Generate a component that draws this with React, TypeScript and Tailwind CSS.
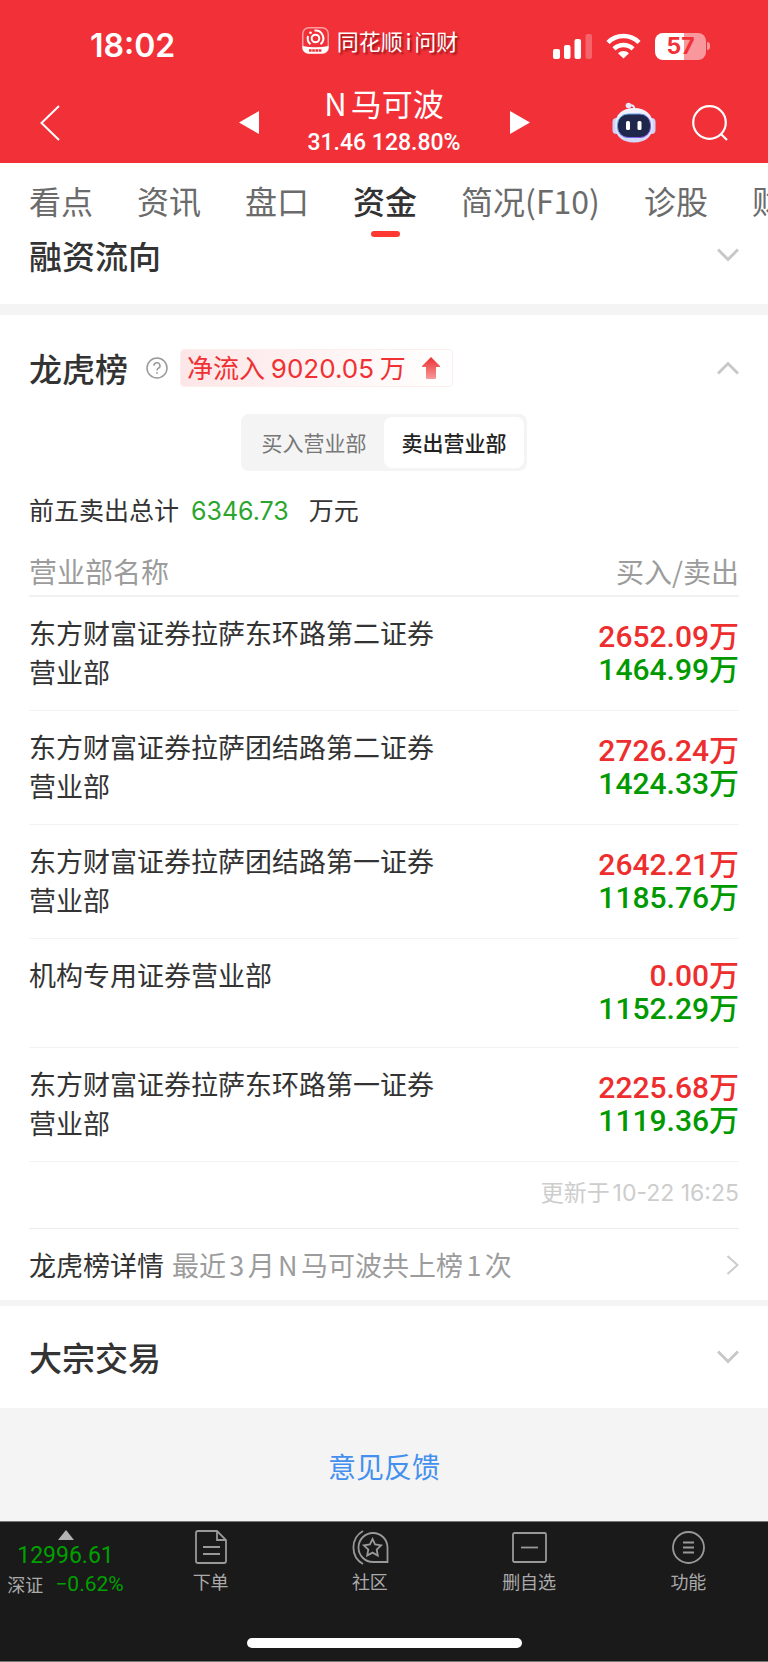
type Department = {
  name: string;
  buy: string;
  sell: string;
};

const tabs = ["看点", "资讯", "盘口", "资金", "简况(F10)", "诊股", "财务"];
const activeTab = "资金";

const departments: Department[] = [
  { name: "东方财富证券拉萨东环路第二证券营业部", buy: "2652.09万", sell: "1464.99万" },
  { name: "东方财富证券拉萨团结路第二证券营业部", buy: "2726.24万", sell: "1424.33万" },
  { name: "东方财富证券拉萨团结路第一证券营业部", buy: "2642.21万", sell: "1185.76万" },
  { name: "机构专用证券营业部", buy: "0.00万", sell: "1152.29万" },
  { name: "东方财富证券拉萨东环路第一证券营业部", buy: "2225.68万", sell: "1119.36万" },
];

function Chevron({ up = false }: { up?: boolean }) {
  return (
    <svg width="22" height="14" viewBox="0 0 22 14" fill="none" stroke="#c8c8c8" strokeWidth="3" aria-hidden="true">
      <path d={up ? "M1 12.500 11 2.500 21 12.500" : "M1 1.500 11 11.500 21 1.500"} />
    </svg>
  );
}

function AppLogo() {
  return (
    <svg width="27" height="27" viewBox="0 0 27 27" fill="none" aria-hidden="true">
      <rect x="0.75" y="0.75" width="25.5" height="25.5" rx="6" stroke="#fa9ea2" strokeWidth="1.5" />
      <path d="M0.5 19Q13.500 21.500 26.500 19V20.500A6 6 0 0 1 20.500 26.500H6.500A6 6 0 0 1 0.500 20.500Z" fill="#fff" />
      <path d="M12.500 3.500A7.800 7.800 0 0 1 18.500 17.200M8.500 17.200A7.800 7.800 0 0 1 6 9" stroke="#fff" strokeWidth="2" />
      <circle cx="13.500" cy="11.500" r="3.800" stroke="#fff" strokeWidth="2" />
      <circle cx="8.500" cy="5.800" r="1.300" fill="#fff" />
      <path d="M7 23.500H20" stroke="#f23038" strokeWidth="2.500" strokeDasharray="2.600 0.600" />
    </svg>
  );
}

function SignalIcon() {
  return (
    <svg width="39" height="25" viewBox="0 0 39 25" fill="#fff" aria-hidden="true">
      <rect x="0" y="15" width="7" height="10" rx="2" />
      <rect x="11" y="11" width="6.500" height="14" rx="2" />
      <rect x="21.500" y="5" width="6.500" height="20" rx="2" />
      <rect x="32.500" y="0" width="6.500" height="25" rx="2" opacity="0.25" />
    </svg>
  );
}

function WifiIcon() {
  return (
    <svg width="35" height="26" viewBox="0 0 35 26" fill="none" stroke="#fff" strokeWidth="4.500" aria-hidden="true">
      <path d="M2 9.500A22 22 0 0 1 33 9.500" />
      <path d="M8 15.800A13.500 13.500 0 0 1 27 15.800" />
      <path d="M17.500 25.500 12 20.200A8 8 0 0 1 23 20.200Z" fill="#fff" stroke="none" />
    </svg>
  );
}

function RobotIcon() {
  return (
    <svg width="44" height="41" viewBox="0 0 44 41" fill="none" aria-hidden="true">
      <defs>
        <linearGradient id="robot-shell" x1="0" y1="0" x2="0" y2="1">
          <stop offset="0" stopColor="#f4f5ff" />
          <stop offset="1" stopColor="#d3d6f6" />
        </linearGradient>
        <linearGradient id="robot-rim" x1="0" y1="0" x2="1" y2="1">
          <stop offset="0" stopColor="#58c4e8" />
          <stop offset="1" stopColor="#8a3df0" />
        </linearGradient>
      </defs>
      <path d="M17 3.500Q22.500 2 22.500 8" stroke="#e6e8fb" strokeWidth="2" />
      <circle cx="16.500" cy="3.500" r="2.800" fill="#e6e8fb" />
      <rect x="0.500" y="16" width="8" height="16" rx="4" fill="#cfd4f7" />
      <rect x="35.500" y="16" width="8" height="16" rx="4" fill="#cfd4f7" />
      <path d="M22 6C34 6 41 13 41 23.500S34 40.500 22 40.500 3 34 3 23.500 10 6 22 6Z" fill="url(#robot-shell)" />
      <rect x="5.500" y="12" width="33" height="23.500" rx="10.500" fill="#1f274b" stroke="url(#robot-rim)" strokeWidth="1" />
      <rect x="14" y="19" width="4" height="9" rx="1.500" fill="#fff" />
      <rect x="25.500" y="19" width="4" height="9" rx="1.500" fill="#fff" />
    </svg>
  );
}

function StatusBar() {
  return (
    <div className="grid h-20 grid-cols-[1fr_auto_1fr] items-center pt-3">
      <div className="pl-[90px] font-[Inter] text-[32px] leading-10 font-semibold">18:02</div>
      <div className="flex items-center gap-2 pr-2 pb-3">
        <AppLogo />
        <span className="text-[22px] leading-6 [text-autospace:normal] [text-shadow:2px_2px_2px_rgba(90,0,0,0.6)]">
          同花顺i问财
        </span>
      </div>
      <div className="flex items-center justify-end gap-3.5 pr-[58px]">
        <SignalIcon />
        <WifiIcon />
        <div className="flex items-center gap-px">
          <div className="flex h-[27px] w-[51px] items-center justify-center rounded-lg bg-linear-to-r from-white from-56% to-[#f9989c] to-56% font-[Inter] text-[23px] leading-none font-bold text-[#f23038]">
            57
          </div>
          <div className="h-2 w-[3px] rounded-r-full bg-[#f9989c]" />
        </div>
      </div>
    </div>
  );
}

function TitleBar() {
  return (
    <div className="grid h-[83px] grid-cols-[1fr_auto_1fr] items-center pt-0.5">
      <button type="button" aria-label="返回" className="justify-self-start pl-10">
        <svg width="20" height="36" viewBox="0 0 20 36" fill="none" stroke="#fff" strokeWidth="2">
          <path d="M19 1 1.500 18 19 35" />
        </svg>
      </button>
      <div className="flex w-[291px] items-center justify-between">
        <button type="button" aria-label="上一只">
          <svg width="20" height="23" viewBox="0 0 20 23" fill="#fff">
            <path d="M20 0V23L0 11.500Z" />
          </svg>
        </button>
        <div className="text-center">
          <h1 className="text-[31px] leading-10 [text-autospace:normal]">N马可波</h1>
          <p className="font-[Roboto] text-[23px] leading-10 font-medium">31.46 128.80%</p>
        </div>
        <button type="button" aria-label="下一只">
          <svg width="20" height="23" viewBox="0 0 20 23" fill="#fff">
            <path d="M0 0V23L20 11.500Z" />
          </svg>
        </button>
      </div>
      <div className="flex items-center justify-end gap-9 pr-10">
        <button type="button" aria-label="智能助手">
          <RobotIcon />
        </button>
        <button type="button" aria-label="搜索">
          <svg width="36" height="36" viewBox="0 0 36 36" fill="none" stroke="#fff" strokeWidth="2.200">
            <circle cx="17.500" cy="17.500" r="16.300" />
            <path d="M28.500 28.500 35 35" />
          </svg>
        </button>
      </div>
    </div>
  );
}

function Tabs() {
  return (
    <nav className="flex h-[79px] gap-11 overflow-hidden pt-3.5 pl-[29px] text-[32px] leading-[46px] whitespace-nowrap">
      {tabs.map((tab) =>
        tab === activeTab ? (
          <a key={tab} href="#" aria-current="page" className="flex shrink-0 flex-col items-center font-medium text-[#333333]">
            {tab}
            <span className="mt-2 h-1.5 w-[29px] rounded-full bg-[#ff3832]" />
          </a>
        ) : (
          <a key={tab} href="#" className="shrink-0 text-[#6b6b6b]">
            {tab}
          </a>
        ),
      )}
    </nav>
  );
}

function DepartmentTable() {
  return (
    <table className="mt-[21px] w-full border-collapse">
      <thead>
        <tr className="border-b-2 border-[#f1f1f1] text-[28px] leading-[46px] text-[#9c9c9c]">
          <th scope="col" className="pb-px text-left font-normal">营业部名称</th>
          <th scope="col" className="pb-px text-right font-normal">买入/卖出</th>
        </tr>
      </thead>
      <tbody>
        {departments.map((item) => (
          <tr key={item.name} className="border-b border-[#f3f3f3]">
            <td className="pt-4 pb-[19px] align-top text-[27px] leading-[39px] text-[#333333]">
              <div className="max-w-[410px]">{item.name}</div>
            </td>
            <td className="pt-5 pb-[22px] text-right align-middle font-[Roboto,'Noto_Sans_CJK_SC',sans-serif] text-[30px] font-medium">
              <div className="h-[33px] leading-[33px] text-[#ee2e2e]">{item.buy}</div>
              <div className="h-[33px] leading-[33px] text-[#009a00]">{item.sell}</div>
            </td>
          </tr>
        ))}
      </tbody>
    </table>
  );
}

function DragonTiger() {
  return (
    <section className="px-[29px] pt-[30px]">
      <div className="flex items-center">
        <h2 className="text-[33px] leading-[46px] font-medium text-[#333333]">龙虎榜</h2>
        <button type="button" aria-label="说明" className="ml-[18px]">
          <svg width="22" height="22" viewBox="0 0 22 22" fill="none" stroke="#999999" strokeWidth="1.500">
            <circle cx="11" cy="11" r="10" />
            <path d="M8 8.800A3 2.900 0 1 1 12.400 11.200Q11 12 11 13.600M11 15V16.800" />
          </svg>
        </button>
        <div className="ml-3 flex h-[38px] items-center gap-4 rounded-sm border border-[#fdeeee] bg-linear-to-r from-[#fde6e7] to-white pr-3 pl-1.5 text-[26px] leading-9 text-[#f03032]">
          <span>
            净流入 <span className="font-[Inter]">9020.05</span> 万
          </span>
          <svg width="18" height="22" viewBox="0 0 18 22" aria-hidden="true">
            <defs>
              <linearGradient id="inflow-arrow" x1="0" y1="0" x2="0" y2="1">
                <stop offset="0" stopColor="#ea2f31" />
                <stop offset="1" stopColor="#f79a9b" />
              </linearGradient>
            </defs>
            <path d="M9 0 18 9V10H14V21Q14 22 13 22H5Q4 22 4 21V10H0V9Z" fill="url(#inflow-arrow)" />
          </svg>
        </div>
        <button type="button" aria-label="收起" className="ml-auto">
          <Chevron up />
        </button>
      </div>

      <div className="mt-[23px] flex justify-center">
        <div className="flex rounded-lg bg-[#f4f4f4] p-[3px] text-[21px] leading-[51px]">
          <button type="button" aria-pressed="false" className="w-[140px] text-[#777777]">
            买入营业部
          </button>
          <button type="button" aria-pressed="true" className="w-[140px] rounded-lg bg-white font-medium text-[#222222]">
            卖出营业部
          </button>
        </div>
      </div>

      <p className="mt-5 flex h-9 items-baseline text-[25px] leading-9 text-[#333333]">
        前五卖出总计
        <span className="ml-3 font-[Inter] text-[#2ba52d]">6346.73</span>
        <span className="ml-5">万元</span>
      </p>

      <DepartmentTable />

      <p className="border-b border-[#ececec] pb-1 text-right font-[Inter,'Noto_Sans_CJK_SC',sans-serif] text-[23px] leading-[62px] text-[#cdcdcd] [text-autospace:normal]">
        更新于10-22 16:25
      </p>
      <a href="#" className="flex items-center gap-2 text-[27px] leading-[71px]">
        <span className="text-[#333333]">龙虎榜详情</span>
        <span className="text-[#9c9c9c] [text-autospace:normal]">最近3月N马可波共上榜1次</span>
        <svg className="ml-auto" width="13" height="20" viewBox="0 0 13 20" fill="none" stroke="#cccccc" strokeWidth="2" aria-hidden="true">
          <path d="M1.500 1 11.500 10 1.500 19" />
        </svg>
      </a>
    </section>
  );
}

const navIcons = {
  order: <path d="M1 3Q1 1 3 1H22L31 10V31Q31 33 29 33H3Q1 33 1 31ZM22 1V10H31M8 17H25M8 24H25" />,
  community: (
    <>
      <path d="M12 1A19 19 0 0 0 12 34" />
      <path d="M22 32A14.500 14.500 0 1 1 36.500 17.500V32Z" />
      <path d="m21.500 9 2.600 5.500 6 .8-4.400 4.200 1.100 6-5.300-2.900-5.300 2.900 1.100-6-4.400-4.200 6-.8Z" />
    </>
  ),
  remove: (
    <>
      <rect x="1" y="3" width="33" height="29" rx="1.500" />
      <path d="M9 17.500H26" />
    </>
  ),
  more: (
    <>
      <circle cx="16.500" cy="17.500" r="15.500" />
      <path d="M11 12.500H22M11 17.500H22M11 22.500H22" />
    </>
  ),
};

const navItems = [
  { label: "下单", width: 32, icon: navIcons.order },
  { label: "社区", width: 38, icon: navIcons.community },
  { label: "删自选", width: 35, icon: navIcons.remove },
  { label: "功能", width: 33, icon: navIcons.more },
];

function BottomBar() {
  return (
    <footer className="border-y border-[#777777] bg-[#1a1a1a] pb-[13px]">
      <div className="flex h-[116px] pt-2">
        <button type="button" className="flex w-[131px] shrink-0 flex-col items-center">
          <svg width="16" height="10" viewBox="0 0 16 10" fill="#b3b3b3" aria-hidden="true">
            <path d="M8 0 16 10H0Z" />
          </svg>
          <span className="mt-1 font-[Roboto] text-[23px] leading-6 text-[#00a000]">12996.61</span>
          <span className="mt-0.5 flex gap-3 text-[18px] leading-7 text-[#aaaaaa]">
            深证 <span className="font-[Roboto] text-[21px] text-[#00a000]">−0.62%</span>
          </span>
        </button>
        <nav className="grid flex-1 grid-cols-4">
          {navItems.map((item) => (
            <a key={item.label} href="#" className="flex flex-col items-center text-[18px] leading-6 text-[#aaaaaa]">
              <svg width={item.width} height="35" viewBox={`0 0 ${item.width} 35`} fill="none" stroke="#999999" strokeWidth="1.800" aria-hidden="true">
                {item.icon}
              </svg>
              <span className="mt-1">{item.label}</span>
            </a>
          ))}
        </nav>
      </div>
      <div className="mx-auto h-2.5 w-[275px] rounded-full bg-white" />
    </footer>
  );
}

export default function App() {
  return (
    <div className="bg-white font-['Noto_Sans_CJK_SC',sans-serif]">
      <header className="bg-[#f23038] text-white">
        <StatusBar />
        <TitleBar />
      </header>
      <Tabs />
      <main>
        {/* scrolled partly under the tab row */}
        <section className="overflow-hidden">
          <div className="-mt-9 flex h-[98px] items-center justify-between px-[29px]">
            <h2 className="text-[33px] leading-[46px] font-medium text-[#333333]">融资流向</h2>
            <button type="button" aria-label="展开">
              <Chevron />
            </button>
          </div>
        </section>
        <div className="h-[11px] bg-[#f4f4f4]" />
        <DragonTiger />
        <div className="h-1.5 bg-[#f4f4f4]" />
        <section className="flex h-[102px] items-center justify-between px-[29px]">
          <h2 className="text-[33px] leading-[46px] font-medium text-[#333333]">大宗交易</h2>
          <button type="button" aria-label="展开">
            <Chevron />
          </button>
        </section>
        <div className="bg-[#f4f4f4] pt-[38px] pb-[34px] text-center text-[28px] leading-[41px]">
          <a href="#" className="text-[#4490ee]">
            意见反馈
          </a>
        </div>
      </main>
      <BottomBar />
    </div>
  );
}
